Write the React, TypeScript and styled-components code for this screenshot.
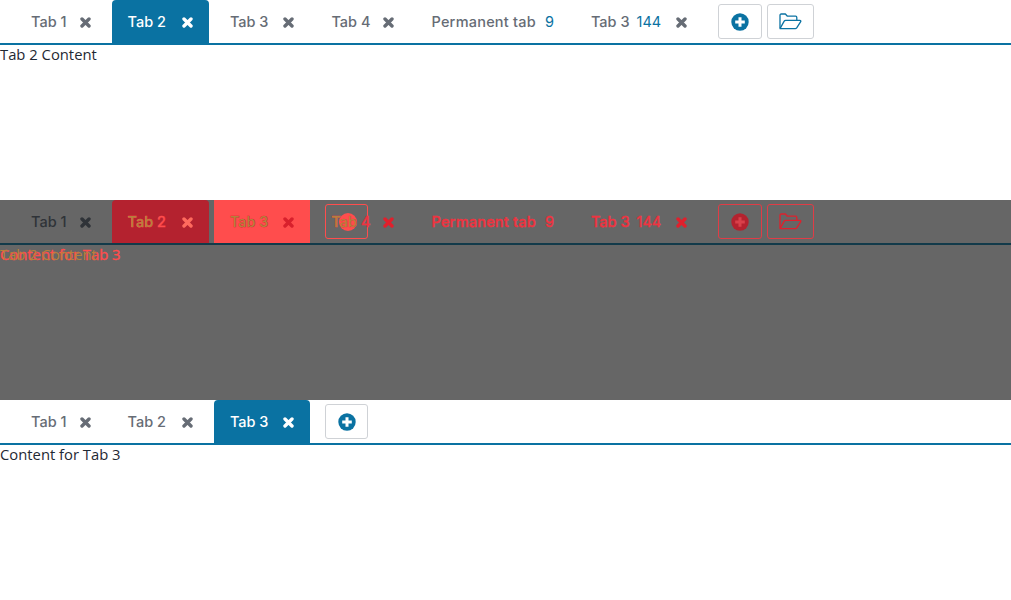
import React from "react";
import styled, { createGlobalStyle } from "styled-components";

const Global = createGlobalStyle`
  html, body { margin: 0; padding: 0; background: #fff; }
  body { font-family: "Open Sans", "Liberation Sans", sans-serif; font-size: 14.8px; color: #1f2933; }
`;

const Section = styled.section<{ $bg: string }>`
  height: 200px;
  background: ${(p) => p.$bg};
  overflow: hidden;
`;

const Strip = styled.div<{ $line: string }>`
  display: flex;
  align-items: stretch;
  gap: 5px;
  height: 45px;
  box-sizing: border-box;
  padding-left: 15px;
  border-bottom: 2px solid ${(p) => p.$line};
`;

const Tab = styled.div<{ $bg?: string; $color: string; $radius?: number; $smear?: boolean }>`
  position: relative;
  display: flex;
  align-items: center;
  padding: 0 16px;
  font-family: "Inter", "Liberation Sans", sans-serif;
  font-size: 14.5px;
  font-weight: 500;
  color: ${(p) => p.$color};
  background: ${(p) => p.$bg || "transparent"};
  border-radius: ${(p) => (p.$radius === undefined ? 4 : p.$radius)}px ${(p) => (p.$radius === undefined ? 4 : p.$radius)}px 0 0;
  ${(p) => (p.$smear ? "-webkit-text-stroke: 0.4px currentColor;" : "")}
`;

const Label = styled.span<{ $spaced?: boolean }>`
  position: relative;
  white-space: nowrap;
  ${(p) => (p.$spaced ? "letter-spacing: 0.22px;" : "")}
`;

const Ghost = styled.span<{ $color: string }>`
  position: absolute;
  left: 0;
  top: 0;
  white-space: nowrap;
  -webkit-text-stroke: 0;
  color: ${(p) => p.$color};
`;

const Count = styled.span<{ $color: string; $gap?: number }>`
  margin-left: ${(p) => p.$gap ?? 9}px;
  font-weight: 400;
  color: ${(p) => p.$color};
`;

const CloseSvg = styled.svg<{ $color: string; $gap: number }>`
  margin: 1px 0 0 ${(p) => p.$gap}px;
  width: 11px;
  height: 11px;
  flex: none;
  color: ${(p) => p.$color};
`;

const Close = ({ $color, $gap = 15 }: { $color: string; $gap?: number }) => (
  <CloseSvg $color={$color} $gap={$gap} viewBox="0 0 11 11">
    <path d="M2 2l7 7M9 2l-7 7" stroke="currentColor" strokeWidth="3.4" strokeLinecap="round" fill="none" />
  </CloseSvg>
);

const Actions = styled.div`
  display: flex;
  gap: 5px;
  margin-left: 10px;
`;

const ToolButton = styled.div<{ $width: number; $border: string; $color: string }>`
  display: flex;
  align-items: center;
  justify-content: center;
  box-sizing: border-box;
  width: ${(p) => p.$width}px;
  height: 35px;
  margin-top: 4px;
  background: transparent;
  border: 1px solid ${(p) => p.$border};
  border-radius: 3px;
  color: ${(p) => p.$color};
`;

const FloatingButton = styled(ToolButton)`
  position: absolute;
  left: 10px;
  top: 0;
`;

const FloatingDot = styled.span`
  position: absolute;
  left: 24px;
  top: 13px;
  width: 18px;
  height: 18px;
  border-radius: 50%;
  background: #ff4d4d;
`;

const Content = styled.div<{ $color?: string; $smear?: boolean }>`
  position: relative;
  line-height: 18px;
  color: ${(p) => p.$color || "#1f2933"};
  ${(p) => (p.$smear ? "-webkit-text-stroke: 0.4px currentColor;" : "")}
`;

const GhostContent = styled.span<{ $color: string }>`
  position: absolute;
  left: 0;
  top: 0;
  color: ${(p) => p.$color};
  white-space: nowrap;
  -webkit-text-stroke: 0;
`;

const PlusIcon = ({ hole }: { hole: string }) => (
  <svg width="18" height="18" viewBox="0 0 18 18">
    <circle cx="9" cy="9" r="8.7" fill="currentColor" />
    <path d="M9 4.2v9.6M4.2 9h9.6" stroke={hole} strokeWidth="3" />
  </svg>
);

const FolderIcon = () => (
  <svg width="23" height="17" viewBox="0 0 23 17" fill="none" stroke="currentColor" strokeWidth="1.3" strokeLinejoin="round">
    <path d="M1 15V2.2C1 1.5 1.5 1 2.2 1h4.2l2 2.2h8.2c.7 0 1.2.5 1.2 1.2V7" />
    <path d="M1 15.6h15.4c.5 0 1-.3 1.3-.7l4-6.2c.4-.7 0-1.4-.8-1.4H6.6c-.6 0-1.1.3-1.4.8L1 15.6z" />
  </svg>
);

const BLUE = "#0a72a2";
const GRAY = "#666c75";
const RED = "#ef3340";
const BRIGHT = "#ff4d4d";
const TAN = "#b5813c";

export default function App() {
  return (
    <>
      <Global />
      <Section $bg="#fff">
        <Strip $line={BLUE}>
          <Tab $color={GRAY}><Label>Tab 1</Label><Close $color={GRAY} $gap={13} /></Tab>
          <Tab $color="#fff" $bg={BLUE}><Label>Tab 2</Label><Close $color="#fff" $gap={16} /></Tab>
          <Tab $color={GRAY}><Label>Tab 3</Label><Close $color={GRAY} /></Tab>
          <Tab $color={GRAY}><Label>Tab 4</Label><Close $color={GRAY} $gap={13} /></Tab>
          <Tab $color={GRAY}><Label $spaced>Permanent tab</Label><Count $color={BLUE}>9</Count></Tab>
          <Tab $color={GRAY}><Label>Tab 3</Label><Count $color={BLUE} $gap={7}>144</Count><Close $color={GRAY} $gap={15} /></Tab>
          <Actions>
            <ToolButton $width={44} $border="#cfd2d6" $color={BLUE}><PlusIcon hole="#fff" /></ToolButton>
            <ToolButton $width={47} $border="#cfd2d6" $color={BLUE}><FolderIcon /></ToolButton>
          </Actions>
        </Strip>
        <Content>Tab 2 Content</Content>
      </Section>

      <Section $bg="#666666">
        <Strip $line="#123a4a">
          <Tab $color="#2f3338"><Label>Tab 1</Label><Close $color="#2f3338" $gap={13} /></Tab>
          <Tab $color={BRIGHT} $bg="#b4222f" $smear><Label>Tab 2<Ghost $color={TAN}>Tab</Ghost></Label><Close $color="#ff6b5e" $gap={16} /></Tab>
          <Tab $color="#d8202c" $bg={BRIGHT} $radius={0} $smear><Label>Tab 3<Ghost $color={TAN}>Tab 3</Ghost></Label><Close $color="#d8202c" /></Tab>
          <Tab $color={RED} $smear>
            <FloatingButton $width={43} $border={BRIGHT} $color={BRIGHT} />
            <FloatingDot />
            <Label>Tab 4<Ghost $color={TAN}>Tab</Ghost></Label>
            <Close $color="#e0202c" $gap={13} />
          </Tab>
          <Tab $color={RED} $smear><Label $spaced>Permanent tab</Label><Count $color={RED}>9</Count></Tab>
          <Tab $color={RED} $smear><Label>Tab 3</Label><Count $color={RED} $gap={7}>144</Count><Close $color="#e0202c" $gap={15} /></Tab>
          <Actions>
            <ToolButton $width={44} $border="#e03c46" $color="#b4222f"><PlusIcon hole="#d9404a" /></ToolButton>
            <ToolButton $width={47} $border="#e03c46" $color="#e0202c"><FolderIcon /></ToolButton>
          </Actions>
        </Strip>
        <Content $color={BRIGHT} $smear>
          Content for Tab 3
          <GhostContent $color={TAN}>Tab 2 Content</GhostContent>
        </Content>
      </Section>

      <Section $bg="#fff">
        <Strip $line={BLUE}>
          <Tab $color={GRAY}><Label>Tab 1</Label><Close $color={GRAY} $gap={13} /></Tab>
          <Tab $color={GRAY}><Label>Tab 2</Label><Close $color={GRAY} $gap={16} /></Tab>
          <Tab $color="#fff" $bg={BLUE}><Label>Tab 3</Label><Close $color="#fff" /></Tab>
          <Actions>
            <ToolButton $width={43} $border="#cfd2d6" $color={BLUE}><PlusIcon hole="#fff" /></ToolButton>
          </Actions>
        </Strip>
        <Content>Content for Tab 3</Content>
      </Section>
    </>
  );
}
